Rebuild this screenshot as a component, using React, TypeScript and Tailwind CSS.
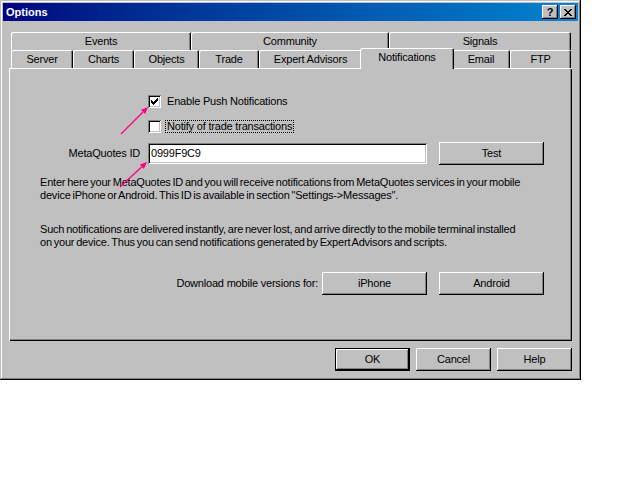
const raised =
  "shadow-[inset_-1px_-1px_#000,inset_1px_1px_#fff,inset_-2px_-2px_#808080]";
const sunken =
  "shadow-[inset_1px_1px_#808080,inset_-1px_-1px_#fff,inset_2px_2px_#000,inset_-2px_-2px_#c0c0c0]";
const tabEdge =
  "shadow-[inset_1px_1px_#fff,inset_-1px_0_#000,inset_-2px_0_#808080]";

function Tab({ label, w, selected }: { label: string; w: string; selected?: boolean }) {
  if (selected) {
    return (
      <div
        className={`relative z-10 -mx-[2px] mb-[-1px] flex h-[21px] shrink-0 items-center justify-center rounded-t-[2px] bg-[#c0c0c0] pb-[3px] shadow-[inset_1px_1px_#fff,inset_-1px_0_#000,inset_-2px_0_#808080] ${w}`}
      >
        {label}
      </div>
    );
  }
  return (
    <div
      className={`flex h-[18px] shrink-0 items-center justify-center rounded-t-[2px] ${tabEdge} ${w}`}
    >
      {label}
    </div>
  );
}

function Button({ label, w = "w-[105px]", isDefault }: { label: string; w?: string; isDefault?: boolean }) {
  if (isDefault) {
    return (
      <div className={`h-[23px] border border-black ${w}`}>
        <div className={`flex h-full items-center justify-center ${raised}`}>{label}</div>
      </div>
    );
  }
  return (
    <div className={`flex h-[23px] shrink-0 items-center justify-center ${raised} ${w}`}>
      {label}
    </div>
  );
}

const checkPixels = [
  [6, 0], [5, 1], [6, 1], [0, 2], [4, 2], [5, 2], [6, 2], [0, 3], [1, 3], [3, 3], [4, 3], [5, 3],
  [0, 4], [1, 4], [2, 4], [3, 4], [4, 4], [1, 5], [2, 5], [3, 5], [2, 6],
];

function Checkbox({ checked }: { checked?: boolean }) {
  return (
    <div className={`flex h-[13px] w-[13px] shrink-0 items-center justify-center bg-white ${sunken}`}>
      {checked && (
        <svg width="7" height="7" viewBox="0 0 7 7" shapeRendering="crispEdges">
          {checkPixels.map(([x, y]) => (
            <rect key={`${x}-${y}`} x={x} y={y} width="1" height="1" fill="#000" />
          ))}
        </svg>
      )}
    </div>
  );
}

function Arrow({ x1, y1, x2, y2 }: { x1: number; y1: number; x2: number; y2: number }) {
  const dx = x2 - x1;
  const dy = y2 - y1;
  const len = Math.hypot(dx, dy);
  const ux = dx / len;
  const uy = dy / len;
  const bx = x2 - ux * 7;
  const by = y2 - uy * 7;
  const p1 = `${bx - uy * 3},${by + ux * 3}`;
  const p2 = `${bx + uy * 3},${by - ux * 3}`;
  return (
    <g>
      <line x1={x1} y1={y1} x2={bx} y2={by} stroke="#ff0080" strokeWidth="1.3" />
      <polygon points={`${x2},${y2} ${p1} ${p2}`} fill="#ff0080" />
    </g>
  );
}

export default function App() {
  return (
    <div className="relative h-[480px] w-[640px] bg-white font-['Liberation_Sans',Arial,sans-serif] text-[11px] leading-[13px] tracking-[-0.2px] text-black">
      <div className="flex h-[380px] w-[581px] flex-col bg-[#c0c0c0] p-[3px] shadow-[inset_-1px_-1px_#000,inset_1px_1px_#c0c0c0,inset_-2px_-2px_#808080,inset_2px_2px_#fff]">
        {/* Caption */}
        <div className="flex h-[18px] items-center justify-between bg-linear-to-r from-[#000080] to-[#1084d0] pl-[3px] pr-[2px]">
          <span className="font-bold tracking-normal text-white">Options</span>
          <div className="flex gap-[2px]">
            <div className={`flex h-[14px] w-[16px] items-center justify-center bg-[#c0c0c0] font-bold ${raised}`}>
              ?
            </div>
            <div className={`flex h-[14px] w-[16px] items-center justify-center bg-[#c0c0c0] ${raised}`}>
              <svg width="8" height="7" viewBox="0 0 8 7" shapeRendering="crispEdges">
                <path d="M0 0h2v1h-2zM6 0h2v1h-2zM1 1h2v1h-2zM5 1h2v1h-2zM2 2h4v1h-4zM3 3h2v1h-2zM2 4h4v1h-4zM1 5h2v1h-2zM5 5h2v1h-2zM0 6h2v1h-2zM6 6h2v1h-2z" fill="#000" />
              </svg>
            </div>
          </div>
        </div>

        {/* Tab control */}
        <div className="mx-[6px] mt-[11px] flex flex-col">
          <div className="flex pl-[2px]">
            <Tab label="Events" w="w-[180px]" />
            <Tab label="Community" w="w-[198px]" />
            <Tab label="Signals" w="w-[182px]" />
          </div>
          <div className="flex h-[18px] items-end pl-[2px]">
            <Tab label="Server" w="w-[62px]" />
            <Tab label="Charts" w="w-[61px]" />
            <Tab label="Objects" w="w-[65px]" />
            <Tab label="Trade" w="w-[60px]" />
            <Tab label="Expert Advisors" w="w-[103px]" />
            <Tab label="Notifications" w="w-[94px]" selected />
            <Tab label="Email" w="w-[58px]" />
            <Tab label="FTP" w="w-[61px]" />
          </div>

          {/* Panel */}
          <div className="flex h-[273px] flex-col pl-[31px] pt-[27px] shadow-[inset_1px_1px_#fff,inset_-1px_-1px_#000,inset_-2px_-2px_#808080]">
            <div className="flex h-[13px] items-center pl-[108px]">
              <Checkbox checked />
              <span className="ml-[6px]">Enable Push Notifications</span>
            </div>
            <div className="mt-[12px] flex h-[13px] items-center pl-[108px]">
              <Checkbox />
              <span className="ml-[4px] border border-dotted border-black px-[1px] leading-[11px]">
                Notify of trade transactions
              </span>
            </div>
            <div className="mt-[9px] flex h-[23px] w-[504px] items-center">
              <span className="w-[108px] pr-[8px] text-right">MetaQuotes ID</span>
              <div className={`flex h-[21px] w-[279px] items-center bg-white pl-[3px] ${sunken}`}>0999F9C9</div>
              <div className="ml-[12px]">
                <Button label="Test" />
              </div>
            </div>
            <p className="mt-[11px] whitespace-nowrap [word-spacing:-1px]">
              Enter here your MetaQuotes ID and you will receive notifications from MetaQuotes services in your mobile
              <br />
              device iPhone or Android. This ID is available in section "Settings-&gt;Messages".
            </p>
            <p className="mt-[21px] whitespace-nowrap [word-spacing:-1px]">
              Such notifications are delivered instantly, are never lost, and arrive directly to the mobile terminal installed
              <br />
              on your device. Thus you can send notifications generated by Expert Advisors and scripts.
            </p>
            <div className="mt-[23px] flex w-[504px] items-center justify-end">
              <span className="mr-[4px]">Download mobile versions for:</span>
              <Button label="iPhone" />
              <div className="ml-[12px]">
                <Button label="Android" />
              </div>
            </div>
          </div>
        </div>

        {/* Dialog buttons */}
        <div className="mr-[6px] mt-[7px] flex justify-end gap-[6px]">
          <Button label="OK" w="w-[75px]" isDefault />
          <Button label="Cancel" w="w-[75px]" />
          <Button label="Help" w="w-[75px]" />
        </div>
      </div>

      {/* Annotation arrows */}
      <svg className="pointer-events-none absolute left-0 top-0" width="640" height="480">
        <Arrow x1={121} y1={134} x2={148} y2={107} />
        <Arrow x1={120} y1={187} x2={147} y2={162} />
      </svg>
    </div>
  );
}
